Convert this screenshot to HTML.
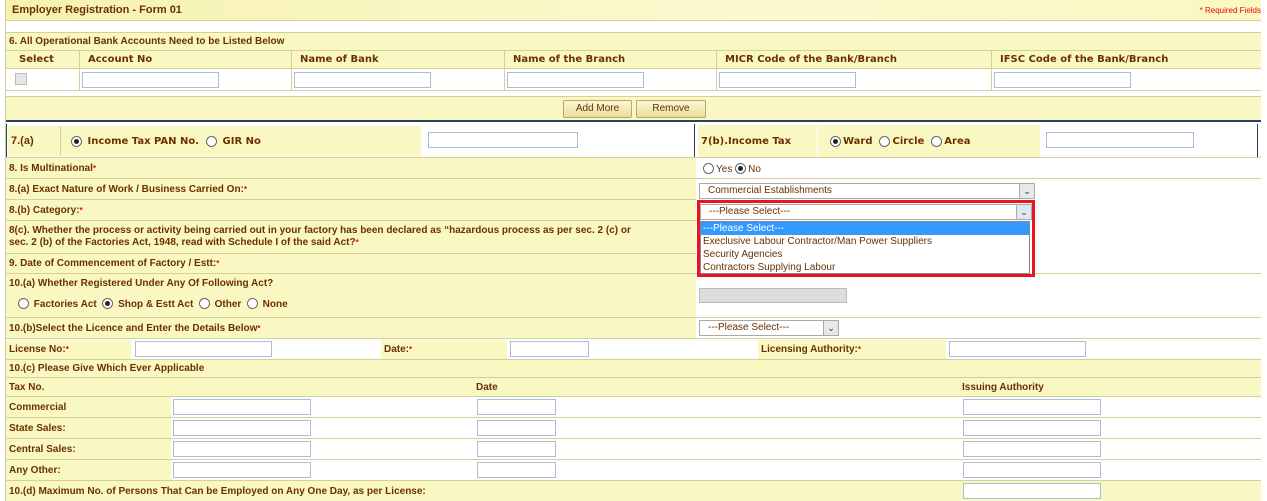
<!DOCTYPE html>
<html><head><meta charset="utf-8"><style>
*{box-sizing:border-box;margin:0;padding:0}
body{width:1267px;height:501px;overflow:hidden;background:#fff;font-family:"Liberation Sans",Arial,sans-serif;color:#6b3000;position:relative}
div{position:absolute}
.y{background:#faf8c2}
.b{font-weight:bold;font-size:10px;line-height:13px;white-space:nowrap}
.dv{font-family:"DejaVu Sans",Verdana,sans-serif;font-size:10px;font-weight:bold}
.l{padding-left:3px;display:flex;align-items:center}
.bd{border-bottom:1px solid #d6cf9c}
.in{background:#fff;border:1px solid #a9bed6;height:16px}
.r{color:#e00;font-size:8px}
.rad{display:inline-block;width:11px;height:11px;border:1px solid #666;border-radius:50%;background:#fff;vertical-align:-2px;margin-right:2px;position:relative}
.rad.on::after{content:"";position:absolute;left:2px;top:2px;width:5px;height:5px;border-radius:50%;background:#222}
.sel{background:#fff;border:1px solid #a9a9a9;font-size:10px;color:#6b3000;padding-left:8px;line-height:14px}
.arr{right:0;top:0;width:15px;height:100%;background:#e8e8e8;border-left:1px solid #aaa;font-size:9px;text-align:center;color:#333;line-height:14px}
.btn{border:1px solid #b8a860;border-radius:2px;background:linear-gradient(#fbf7d4,#e8df9c);font-size:10px;text-align:center;line-height:16px;color:#6b3000}
.v{width:1px;background:#d6cf9c}
</style></head><body>
<div style="left:5px;top:0;width:1px;height:501px;background:#d6cf9c"></div>
<div class="y b l" style="left:6px;top:0;width:1255px;height:20px;background:linear-gradient(90deg,#f6f2b0,#fbf9d0 60%,#faf8c2);font-size:11px;padding-left:6px">Employer Registration - Form 01</div>
<div style="right:6px;top:6px;font-size:8px;color:#e00">* Required Fields</div>
<div class="bd" style="left:6px;top:20px;width:1255px;height:13px;border-top:1px solid #d6cf9c"></div>
<div class="y b l bd" style="left:6px;top:33px;width:1255px;height:18px">6. All Operational Bank Accounts Need to be Listed Below</div>
<div class="y bd" style="left:6px;top:51px;width:1255px;height:18px"></div>
<div class="dv" style="left:19px;top:54px">Select</div>
<div class="dv" style="left:88px;top:54px">Account No</div>
<div class="dv" style="left:300px;top:54px">Name of Bank</div>
<div class="dv" style="left:513px;top:54px">Name of the Branch</div>
<div class="dv" style="left:725px;top:54px">MICR Code of the Bank/Branch</div>
<div class="dv" style="left:1000px;top:54px">IFSC Code of the Bank/Branch</div>
<div class="v" style="left:79px;top:51px;height:40px"></div>
<div class="v" style="left:291px;top:51px;height:40px"></div>
<div class="v" style="left:504px;top:51px;height:40px"></div>
<div class="v" style="left:716px;top:51px;height:40px"></div>
<div class="v" style="left:991px;top:51px;height:40px"></div>
<div class="bd" style="left:6px;top:69px;width:1255px;height:22px"></div>
<div style="left:15px;top:73px;width:12px;height:12px;border:1px solid #bbb;background:#e6e6e6"></div>
<div class="in" style="left:82px;top:72px;width:137px"></div>
<div class="in" style="left:294px;top:72px;width:137px"></div>
<div class="in" style="left:507px;top:72px;width:137px"></div>
<div class="in" style="left:719px;top:72px;width:137px"></div>
<div class="in" style="left:994px;top:72px;width:137px"></div>
<div class="y" style="left:6px;top:96px;width:1255px;height:26px;border-top:1px solid #d6cf9c;border-bottom:2px solid #2a4060"></div>
<div class="btn" style="left:563px;top:100px;width:69px;height:18px">Add More</div>
<div class="btn" style="left:636px;top:100px;width:70px;height:18px">Remove</div>
<!-- row 7 -->
<div style="left:6px;top:124px;width:689px;height:34px;border:1px solid #2a4060;border-top:none"></div>
<div class="y b l" style="left:8px;top:126px;width:52px;height:30px;font-size:11px">7.(a)</div>
<div class="v" style="left:60px;top:126px;height:30px"></div>
<div class="y l dv" style="left:61px;top:126px;width:360px;height:30px;padding-left:10px;white-space:nowrap"><span class="rad on"></span>&nbsp;Income Tax PAN No.&nbsp;&nbsp;<span class="rad"></span>&nbsp;GIR No</div>
<div class="in" style="left:428px;top:132px;width:150px"></div>
<div class="y l dv" style="left:698px;top:125px;width:119px;height:32px">7(b).Income Tax</div>
<div class="y l dv" style="left:818px;top:125px;width:222px;height:32px;padding-left:12px;white-space:nowrap"><span class="rad on"></span>Ward&nbsp;&nbsp;<span class="rad"></span>Circle&nbsp;&nbsp;<span class="rad"></span>Area</div>
<div class="in" style="left:1046px;top:132px;width:148px"></div>
<div style="left:1257px;top:124px;width:1px;height:34px;background:#2a4060"></div>
<div class="bd" style="left:6px;top:157px;width:1255px;height:1px"></div>
<!-- left label rows -->
<div class="y b l bd" style="left:6px;top:158px;width:690px;height:21px">8. Is Multinational<span class="r">*</span></div>
<div class="y b l bd" style="left:6px;top:179px;width:690px;height:21px">8.(a) Exact Nature of Work / Business Carried On:<span class="r">*</span></div>
<div class="y b l bd" style="left:6px;top:200px;width:690px;height:21px">8.(b) Category:<span class="r">*</span></div>
<div class="y b bd" style="left:6px;top:221px;width:690px;height:33px;padding:4px 0 0 3px;line-height:12px">8(c). Whether the process or activity being carried out in your factory has been declared as “hazardous process as per sec. 2 (c) or<br>sec. 2 (b) of the Factories Act, 1948, read with Schedule I of the said Act?<span class="r">*</span></div>
<div class="y b l bd" style="left:6px;top:254px;width:690px;height:20px">9. Date of Commencement of Factory / Estt:<span class="r">*</span></div>
<div class="y b bd" style="left:6px;top:274px;width:690px;height:44px;padding:3px 0 0 3px">10.(a) Whether Registered Under Any Of Following Act?<div style="left:12px;top:24px"><span class="rad"></span> Factories Act&nbsp; <span class="rad on"></span> Shop &amp; Estt Act&nbsp; <span class="rad"></span> Other&nbsp; <span class="rad"></span> None</div></div>
<div class="y b l bd" style="left:6px;top:318px;width:690px;height:21px">10.(b)Select the Licence and Enter the Details Below<span class="r">*</span></div>
<div class="bd" style="left:696px;top:158px;width:565px;height:21px"></div>
<div style="left:703px;top:163px;font-size:10px"><span class="rad"></span>Yes <span class="rad on"></span>No</div>
<div class="bd" style="left:696px;top:254px;width:565px;height:20px"></div>
<div class="bd" style="left:696px;top:274px;width:565px;height:44px"></div>
<div style="left:699px;top:288px;width:148px;height:15px;background:#ddd;border:1px solid #bbb"></div>
<div class="bd" style="left:696px;top:318px;width:565px;height:21px"></div>
<div class="sel" style="left:699px;top:320px;width:140px;height:16px">---Please Select---<div class="arr">&#8964;</div></div>
<div class="sel" style="left:699px;top:183px;width:336px;height:16px">Commercial Establishments<div class="arr">&#8964;</div></div>
<!-- red dropdown -->
<div style="left:697px;top:200px;width:338px;height:77px;border:3px solid #e8141e;background:#fff"></div>
<div class="sel" style="left:700px;top:204px;width:332px;height:16px">---Please Select---<div class="arr" style="background:#dde8f4">&#8964;</div></div>
<div style="left:700px;top:221px;width:330px;height:53px;border:1px solid #888;background:#fff;font-size:10px;line-height:13px">
<div style="position:static;background:#3399ff;color:#fff;padding-left:2px">---Please Select---</div>
<div style="position:static;padding-left:2px">Execlusive Labour Contractor/Man Power Suppliers</div>
<div style="position:static;padding-left:2px">Security Agencies</div>
<div style="position:static;padding-left:2px">Contractors Supplying Labour</div></div>
<!-- license row -->
<div class="bd" style="left:6px;top:339px;width:1255px;height:21px"></div>
<div class="y b l" style="left:6px;top:340px;width:125px;height:19px">License No:<span class="r">*</span></div>
<div class="in" style="left:135px;top:341px;width:137px"></div>
<div class="y b l" style="left:381px;top:340px;width:126px;height:19px">Date:<span class="r">*</span></div>
<div class="in" style="left:510px;top:341px;width:79px"></div>
<div class="y b l" style="left:758px;top:340px;width:188px;height:19px">Licensing Authority:<span class="r">*</span></div>
<div class="in" style="left:949px;top:341px;width:137px"></div>
<div class="y b l bd" style="left:6px;top:360px;width:1255px;height:18px">10.(c) Please Give Which Ever Applicable</div>
<div class="y b bd" style="left:6px;top:378px;width:1255px;height:19px;padding:3px 0 0 3px">Tax No.<div style="left:470px;top:3px">Date</div><div style="left:956px;top:3px">Issuing Authority</div></div>
<div class="y b l bd" style="left:6px;top:397px;width:165px;height:21px">Commercial</div>
<div class="y b l bd" style="left:6px;top:418px;width:165px;height:21px">State Sales:</div>
<div class="y b l bd" style="left:6px;top:439px;width:165px;height:21px">Central Sales:</div>
<div class="y b l bd" style="left:6px;top:460px;width:165px;height:21px">Any Other:</div>
<div class="bd" style="left:171px;top:397px;width:1090px;height:21px"></div>
<div class="bd" style="left:171px;top:418px;width:1090px;height:21px"></div>
<div class="bd" style="left:171px;top:439px;width:1090px;height:21px"></div>
<div class="bd" style="left:171px;top:460px;width:1090px;height:21px"></div>
<div class="in" style="left:173px;top:399px;width:138px"></div><div class="in" style="left:477px;top:399px;width:79px"></div><div class="in" style="left:963px;top:399px;width:138px"></div>
<div class="in" style="left:173px;top:420px;width:138px"></div><div class="in" style="left:477px;top:420px;width:79px"></div><div class="in" style="left:963px;top:420px;width:138px"></div>
<div class="in" style="left:173px;top:441px;width:138px"></div><div class="in" style="left:477px;top:441px;width:79px"></div><div class="in" style="left:963px;top:441px;width:138px"></div>
<div class="in" style="left:173px;top:462px;width:138px"></div><div class="in" style="left:477px;top:462px;width:79px"></div><div class="in" style="left:963px;top:462px;width:138px"></div>
<div class="y b l" style="left:6px;top:481px;width:1255px;height:20px">10.(d) Maximum No. of Persons That Can be Employed on Any One Day, as per License:</div>
<div class="in" style="left:963px;top:483px;width:138px"></div>
</body></html>
